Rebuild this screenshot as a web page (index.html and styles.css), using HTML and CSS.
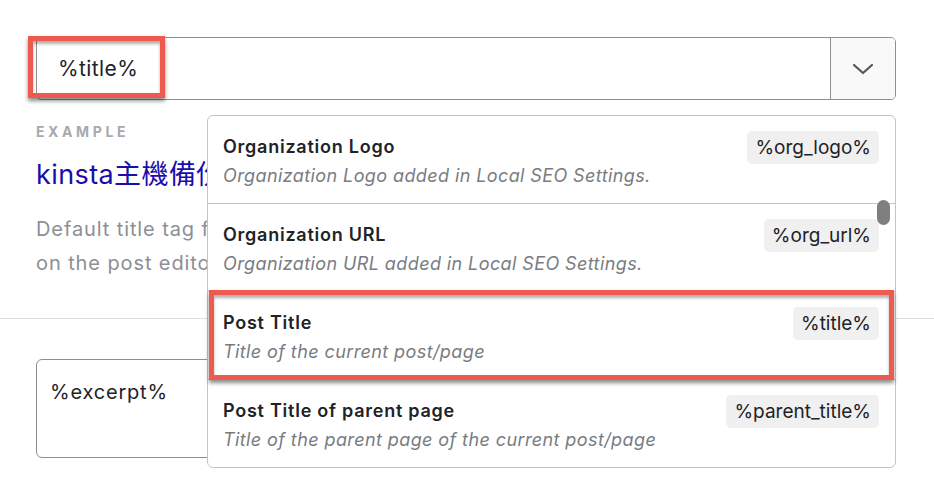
FILE: index.html
```html
<!DOCTYPE html>
<html lang="en">
<head>
  <meta charset="UTF-8" />
  <title>Title tag settings</title>
  <link rel="stylesheet" href="styles.css">
</head>
<body>
  <div class="page">
    <div class="field">
      <div class="select">
        <div class="select-value">%title%</div>
        <div class="select-toggle">
          <svg width="22" height="12" viewBox="0 0 22 12"><polyline points="2,2 11,10 20,2" fill="none" stroke="#50575e" stroke-width="2.2" stroke-linecap="round" stroke-linejoin="round"/></svg>
        </div>
      </div>
      <div class="example">
        <span class="example-label">Example</span>
        <p class="example-title">kinsta主機備份教學 | Kinsta 主機評價</p>
        <p class="example-desc">Default title tag for posts. You can change it for each one individually<br>on the post editor screen.</p>
      </div>
    </div>

    <div class="field field-second">
      <div class="textarea">%excerpt%</div>
    </div>

    <span class="mark mark-input"></span>

    <div class="menu">
      <ul class="menu-list">
        <li class="menu-item">
          <div class="item-text">
            <strong>Organization Logo</strong>
            <em>Organization Logo added in Local SEO Settings.</em>
          </div>
          <code class="tag">%org_logo%</code>
        </li>
        <li class="menu-item">
          <div class="item-text">
            <strong>Organization URL</strong>
            <em>Organization URL added in Local SEO Settings.</em>
          </div>
          <code class="tag">%org_url%</code>
        </li>
        <li class="menu-item">
          <div class="item-text">
            <strong>Post Title</strong>
            <em>Title of the current post/page</em>
          </div>
          <code class="tag">%title%</code>
        </li>
        <li class="menu-item">
          <div class="item-text">
            <strong>Post Title of parent page</strong>
            <em>Title of the parent page of the current post/page</em>
          </div>
          <code class="tag">%parent_title%</code>
        </li>
      </ul>
      <span class="scroll-thumb"></span>
    </div>

    <span class="mark mark-item"></span>
  </div>
</body>
</html>
```

FILE: styles.css
```css
:root {
  --text-color: #1d2327;
  --muted: #8c8f94;
  --border: #8c8f94;
  --light-border: #c3c4c7;
  --tag-bg: #f0f0f1;
  --mark: #ef5a4e;
}

* {
  box-sizing: border-box;
  margin: 0;
  padding: 0;
}

body {
  font-family: Inter, "Noto Sans CJK TC", sans-serif;
  color: var(--text-color);
  background: #fff;
  width: 934px;
  height: 486px;
  overflow: hidden;
  letter-spacing: 0.4px;
}

.page {
  position: relative;
  height: 100%;
}

.field {
  padding: 37px 38px 0 36px;
  border-bottom: 1px solid #dcdcde;
  padding-bottom: 38px;
}

.field-second {
  border-bottom: none;
  padding-top: 40px;
}

.select {
  display: flex;
  height: 63px;
  border: 1px solid var(--border);
  border-radius: 5px;
  overflow: hidden;
}

.select-value {
  flex: 1;
  display: flex;
  align-items: center;
  padding-left: 21px;
  font-size: 21px;
}

.select-toggle {
  width: 65px;
  display: flex;
  align-items: center;
  justify-content: center;
  border-left: 1px solid var(--border);
  background: #f9f9f9;
}

.example {
  margin-top: 22px;
}

.example-label {
  display: block;
  font-size: 14px;
  line-height: 20px;
  font-weight: 700;
  letter-spacing: 3.6px;
  text-transform: uppercase;
  color: #a7aaad;
}

.example-title {
  margin-top: 15px;
  font-size: 27px;
  line-height: 36px;
  color: #1a0dab;
  white-space: nowrap;
}

.example-desc {
  margin-top: 19px;
  font-size: 20px;
  line-height: 34px;
  letter-spacing: 0.9px;
  color: var(--muted);
  white-space: nowrap;
}

.textarea {
  height: 99px;
  border: 1px solid var(--border);
  border-radius: 6px;
  padding: 18px 13px;
  font-size: 20px;
  line-height: 28px;
  letter-spacing: 0.8px;
}

.menu {
  position: absolute;
  left: 207px;
  top: 115px;
  width: 689px;
  height: 353px;
  border: 1px solid var(--light-border);
  border-radius: 6px;
  background: #fff;
  overflow: hidden;
}

.menu-list {
  list-style: none;
}

.menu-item {
  display: flex;
  justify-content: space-between;
  align-items: flex-start;
  height: 88px;
  padding: 15px 16px 0 15px;
  border-bottom: 1px solid var(--light-border);
}

.menu-item:last-child {
  border-bottom: none;
}

.item-text {
  display: flex;
  flex-direction: column;
  padding-top: 2px;
}

.item-text strong {
  font-size: 18px;
  line-height: 28px;
  font-weight: 600;
  letter-spacing: 0.75px;
}

.item-text em {
  font-size: 18px;
  line-height: 29px;
  color: #787c82;
}

.tag {
  font-family: Inter, sans-serif;
  font-size: 19px;
  line-height: 33px;
  padding: 0 8px;
  border-radius: 5px;
  background: var(--tag-bg);
  color: var(--text-color);
  letter-spacing: 0;
}

.scroll-thumb {
  position: absolute;
  right: 5px;
  top: 84px;
  width: 13px;
  height: 25px;
  border-radius: 7px;
  background: #7f7f7f;
}

.mark {
  position: absolute;
  border: 5px solid var(--mark);
  box-shadow: 0 3px 4px rgba(0, 0, 0, 0.45), inset 0 3px 3px rgba(0, 0, 0, 0.3);
}

.mark-input {
  left: 28px;
  top: 36px;
  width: 137px;
  height: 62px;
}

.mark-item {
  left: 209px;
  top: 290px;
  width: 685px;
  height: 90px;
}
```
